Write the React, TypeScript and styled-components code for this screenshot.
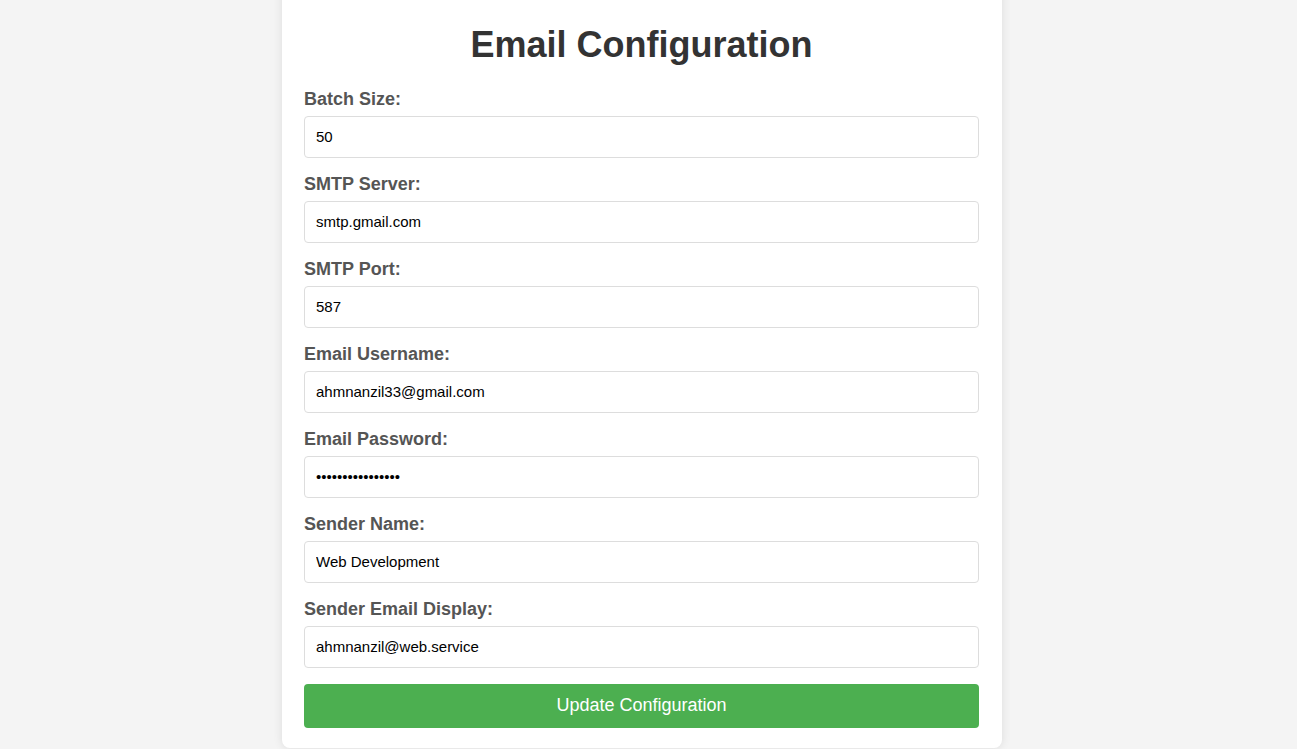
import React from "react";
import styled, { createGlobalStyle } from "styled-components";

const GlobalStyle = createGlobalStyle`
  html, body {
    margin: 0;
    padding: 0;
    background: #f4f4f4;
    font-family: "Liberation Sans", Arial, sans-serif;
    overflow: hidden;
  }
  * { box-sizing: border-box; }
`;

const Page = styled.div`
  height: 100vh;
  display: flex;
  justify-content: center;
  align-items: flex-end;
  padding: 0 13px 1.5px 0;
  overflow: hidden;
`;

const Card = styled.form`
  flex: 0 0 720px;
  width: 720px;
  background: #ffffff;
  border-radius: 8px;
  box-shadow: 0 0 10px rgba(0, 0, 0, 0.1);
  padding: 20px 23px 20px 22px;
`;

const Title = styled.h1`
  margin: 24px 0 22.5px;
  text-align: center;
  font-size: 36px;
  font-weight: 700;
  color: #333333;
`;

const Field = styled.div`
  margin-bottom: 16px;
`;

const Label = styled.label`
  display: block;
  font-size: 18px;
  font-weight: 700;
  color: #555555;
  margin-bottom: 6px;
`;

const Input = styled.input`
  display: block;
  width: 100%;
  height: 42px;
  padding: 0 11px;
  border: 1px solid #dddddd;
  border-radius: 4px;
  font-family: "Liberation Sans", Arial, sans-serif;
  font-size: 15px;
  color: #000000;
  background: #ffffff;
  outline: none;
`;

const Button = styled.button`
  display: block;
  width: 100%;
  height: 44px;
  border: none;
  border-radius: 4px;
  background: #4caf50;
  color: #ffffff;
  font-family: "Liberation Sans", Arial, sans-serif;
  font-size: 18px;
  cursor: pointer;
`;

const fields: { label: string; value: string; type?: string }[] = [
  { label: "Batch Size:", value: "50" },
  { label: "SMTP Server:", value: "smtp.gmail.com" },
  { label: "SMTP Port:", value: "587" },
  { label: "Email Username:", value: "ahmnanzil33@gmail.com" },
  { label: "Email Password:", value: "abcdefghijklmnop", type: "password" },
  { label: "Sender Name:", value: "Web Development" },
  { label: "Sender Email Display:", value: "ahmnanzil@web.service" },
];

export default function App() {
  return (
    <>
      <GlobalStyle />
      <Page>
        <Card onSubmit={(e) => e.preventDefault()}>
          <Title>Email Configuration</Title>
          {fields.map((f, i) => (
            <Field key={i}>
              <Label htmlFor={`f${i}`}>{f.label}</Label>
              <Input id={`f${i}`} type={f.type ?? "text"} defaultValue={f.value} />
            </Field>
          ))}
          <Button type="submit">Update Configuration</Button>
        </Card>
      </Page>
    </>
  );
}
